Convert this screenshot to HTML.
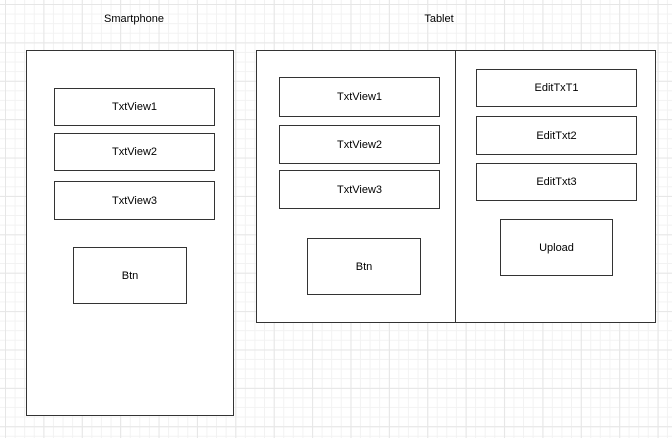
<!DOCTYPE html>
<html><head><style>
html,body{margin:0;padding:0;}
body{width:672px;height:438px;position:relative;overflow:hidden;background:#fff;
background-image:
linear-gradient(to right,#e6e6e6 1px,transparent 1px),
linear-gradient(to bottom,#e6e6e6 1px,transparent 1px),
linear-gradient(to right,#f2f2f2 1px,transparent 1px),
linear-gradient(to bottom,#f2f2f2 1px,transparent 1px);
background-size:38.4px 38.4px,38.4px 38.4px,9.6px 9.6px,9.6px 9.6px;
background-position:5px 4px,5px 4px,5px 4px,5px 4px;
font-family:"Liberation Sans",Arial,sans-serif;font-size:11px;color:#000;}
.b{position:absolute;box-sizing:border-box;border:1px solid #333;background:#fff;display:flex;align-items:center;justify-content:center;}
.t{position:absolute;transform:translateX(-50%);top:13px;}
</style></head><body>
<div class="t" style="left:134px">Smartphone</div>
<div class="t" style="left:439px">Tablet</div>
<div class="b" style="left:26px;top:50px;width:208px;height:366px"></div>
<div class="b" style="left:54px;top:88px;width:161px;height:38px">TxtView1</div>
<div class="b" style="left:54px;top:133px;width:161px;height:38px">TxtView2</div>
<div class="b" style="left:54px;top:181px;width:161px;height:39px">TxtView3</div>
<div class="b" style="left:73px;top:247px;width:114px;height:57px">Btn</div>
<div class="b" style="left:256px;top:50px;width:400px;height:273px"></div>
<div style="position:absolute;left:455px;top:50px;width:1px;height:273px;background:#333"></div>
<div class="b" style="left:279px;top:77px;width:161px;height:40px">TxtView1</div>
<div class="b" style="left:279px;top:125px;width:161px;height:39px">TxtView2</div>
<div class="b" style="left:279px;top:170px;width:161px;height:39px">TxtView3</div>
<div class="b" style="left:307px;top:238px;width:114px;height:57px">Btn</div>
<div class="b" style="left:476px;top:69px;width:161px;height:38px">EditTxT1</div>
<div class="b" style="left:476px;top:116px;width:161px;height:39px">EditTxt2</div>
<div class="b" style="left:476px;top:163px;width:161px;height:38px">EditTxt3</div>
<div class="b" style="left:500px;top:219px;width:113px;height:57px">Upload</div>
</body></html>
